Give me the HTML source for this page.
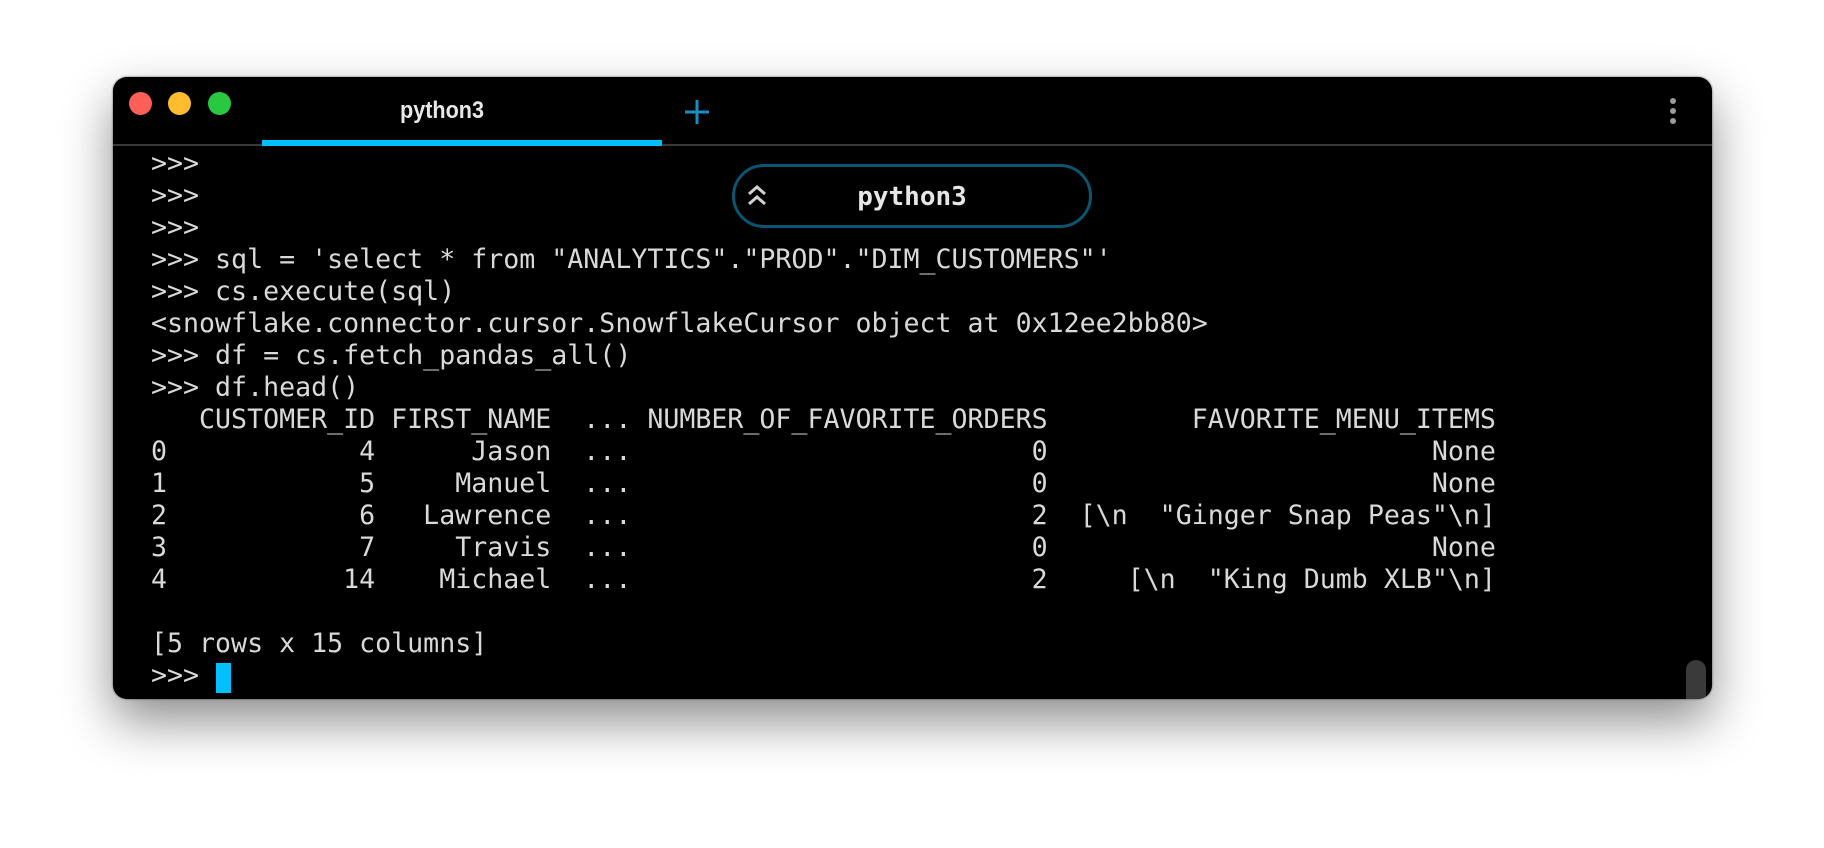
<!DOCTYPE html>
<html><head><meta charset="utf-8"><style>
html,body{margin:0;padding:0;background:#fff;width:1824px;height:848px;overflow:hidden}
.win{position:absolute;left:113px;top:77px;width:1599px;height:622px;background:#000;border-radius:14px;box-shadow:0 22px 50px rgba(0,0,0,0.45),0 0 2px rgba(0,0,0,0.6);overflow:hidden}
.dot{position:absolute;top:92px;width:23px;height:23px;border-radius:50%}
.sep{position:absolute;left:0;right:0;top:67px;height:2px;background:#3a3a3a}
.tab{position:absolute;left:149px;width:360px;top:20px;text-align:center;color:#e8e8e8;font:bold 24px "Liberation Sans",sans-serif;transform:scaleX(0.9)}
.ul{position:absolute;left:149px;width:400px;top:63px;height:6px;background:#00bfff}
pre{position:absolute;left:38px;top:71px;margin:0;font:26.6px/32px "DejaVu Sans Mono",monospace;color:#d9d9d9}
.pill{position:absolute;left:619px;top:87px;width:360px;height:64px;border:3px solid #0b5570;border-radius:33px;box-sizing:border-box;background:#000}
.pill span{position:absolute;left:0;right:0;top:15px;text-align:center;color:#e6e6e6;font:bold 26px "DejaVu Sans Mono",monospace}
.cur{position:absolute;left:103px;top:586px;width:15px;height:30px;background:#00bfff}
.sb{position:absolute;left:1573px;top:583px;width:20px;height:50px;border-radius:10px;background:#3a3a3a}
</style></head><body>
<div class="win">
<div class="dot" style="left:16px;top:15px;background:#fe5f57"></div>
<div class="dot" style="left:55px;top:15px;background:#febc2e"></div>
<div class="dot" style="left:95px;top:15px;background:#28c840"></div>
<div class="tab">python3</div>
<svg style="position:absolute;left:571px;top:22px" width="26" height="26"><path d="M13 1V25M1 13H25" stroke="#1a8fbf" stroke-width="3"/></svg>
<svg style="position:absolute;left:1555px;top:20px" width="10" height="30"><circle cx="5" cy="4" r="3" fill="#9a9a9a"/><circle cx="5" cy="14" r="3" fill="#9a9a9a"/><circle cx="5" cy="24" r="3" fill="#9a9a9a"/></svg>
<div class="sep"></div>
<div class="ul"></div>
<pre>&gt;&gt;&gt;
&gt;&gt;&gt;
&gt;&gt;&gt;
&gt;&gt;&gt; sql = 'select * from "ANALYTICS"."PROD"."DIM_CUSTOMERS"'
&gt;&gt;&gt; cs.execute(sql)
&lt;snowflake.connector.cursor.SnowflakeCursor object at 0x12ee2bb80&gt;
&gt;&gt;&gt; df = cs.fetch_pandas_all()
&gt;&gt;&gt; df.head()
   CUSTOMER_ID FIRST_NAME  ... NUMBER_OF_FAVORITE_ORDERS         FAVORITE_MENU_ITEMS
0            4      Jason  ...                         0                        None
1            5     Manuel  ...                         0                        None
2            6   Lawrence  ...                         2  [\n  "Ginger Snap Peas"\n]
3            7     Travis  ...                         0                        None
4           14    Michael  ...                         2     [\n  "King Dumb XLB"\n]

[5 rows x 15 columns]
&gt;&gt;&gt;</pre>
<div class="pill"><svg style="position:absolute;left:10px;top:16px" width="24" height="26"><path d="M4 11L12 4L20 11M4 21L12 14L20 21" stroke="#d0d0d0" stroke-width="3" fill="none"/></svg><span>python3</span></div>
<div class="cur"></div>
<div class="sb"></div>
</div>
</body></html>
